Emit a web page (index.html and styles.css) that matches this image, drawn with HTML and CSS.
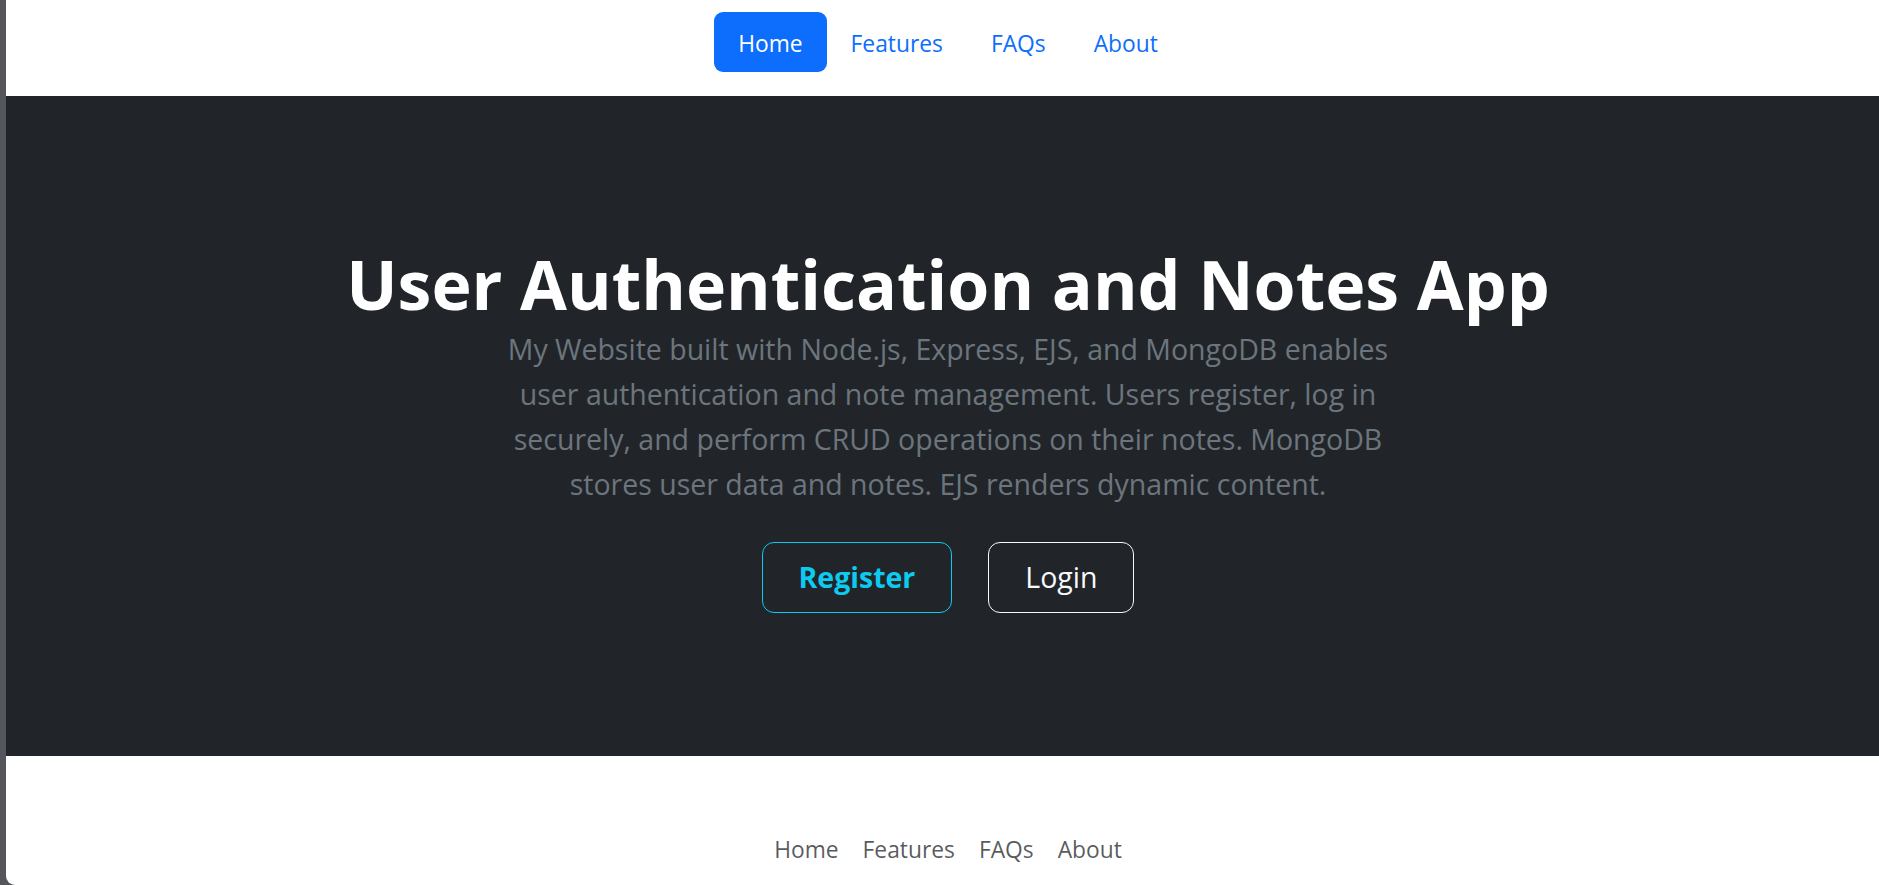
FILE: index.html
```html
<!DOCTYPE html>
<html lang="en">
<head>
<meta charset="utf-8">
<title>User Authentication and Notes App</title>
<link rel="stylesheet" href="styles.css">
</head>
<body>
<div class="app">
  <header class="header">
    <ul class="nav nav-pills">
      <li><a href="#" class="nav-link active">Home</a></li>
      <li><a href="#" class="nav-link">Features</a></li>
      <li><a href="#" class="nav-link">FAQs</a></li>
      <li><a href="#" class="nav-link">About</a></li>
    </ul>
  </header>
  <section class="hero">
    <h1 class="hero-title">User Authentication and Notes App</h1>
    <p class="lead">My Website built with Node.js, Express, EJS, and MongoDB enables user authentication and note management. Users register, log in securely, and perform CRUD operations on their notes. MongoDB stores user data and notes. EJS renders dynamic content.</p>
    <div class="actions">
      <a href="#" class="btn btn-info">Register</a>
      <a href="#" class="btn btn-light">Login</a>
    </div>
  </section>
  <footer class="footer">
    <ul class="nav footer-nav">
      <li><a href="#" class="foot-link">Home</a></li>
      <li><a href="#" class="foot-link">Features</a></li>
      <li><a href="#" class="foot-link">FAQs</a></li>
      <li><a href="#" class="foot-link">About</a></li>
    </ul>
  </footer>
</div>
</body>
</html>
```
FILE: styles.css
```css
* { box-sizing: border-box; }
html, body { margin: 0; padding: 0; height: 100%; }
body {
  background: #55565b;
  font-family: "Open Sans", "Liberation Sans", sans-serif;
  overflow: hidden;
}
.app {
  margin-left: 6px;
  height: 100%;
  background: #fff;
  border-bottom-left-radius: 9px;
  overflow: hidden;
  display: flex;
  flex-direction: column;
}
a { text-decoration: none; }
.nav {
  list-style: none;
  margin: 0;
  padding: 0;
  display: flex;
  justify-content: center;
}
.header {
  display: flex;
  justify-content: center;
  padding: 12px 0 24px 11px;
}
.nav-link {
  display: block;
  padding: 14px 24px 10px;
  font-size: 22.8px;
  line-height: 36px;
  color: #0d6efd;
  border-radius: 9px;
}
.nav-link.active {
  background: #0d6efd;
  color: #fff;
}
.hero {
  background: #212529;
  padding: 145px 0 143px 11px;
  text-align: center;
  display: flex;
  flex-direction: column;
  align-items: center;
}
.hero-title {
  margin: 0;
  color: #fff;
  font-size: 68px;
  font-weight: 700;
  line-height: 86px;
}
.lead {
  margin: 0 0 35px;
  max-width: 900px;
  color: #6c757d;
  font-size: 28.5px;
  line-height: 45px;
}
.actions {
  display: flex;
  justify-content: center;
  gap: 36px;
}
.btn {
  display: inline-block;
  padding: 12px 36px;
  font-size: 28.5px;
  line-height: 45px;
  border: 1px solid;
  border-radius: 12px;
}
.btn-info {
  color: #0dcaf0;
  border-color: #0dcaf0;
  font-weight: 700;
}
.btn-light {
  color: #f8f9fa;
  border-color: #f8f9fa;
}
.footer {
  padding: 64px 0 24px 11px;
}
.foot-link {
  display: block;
  padding: 12px 12px;
  font-size: 22.8px;
  line-height: 36px;
  color: rgba(33, 37, 41, 0.75);
}
```
